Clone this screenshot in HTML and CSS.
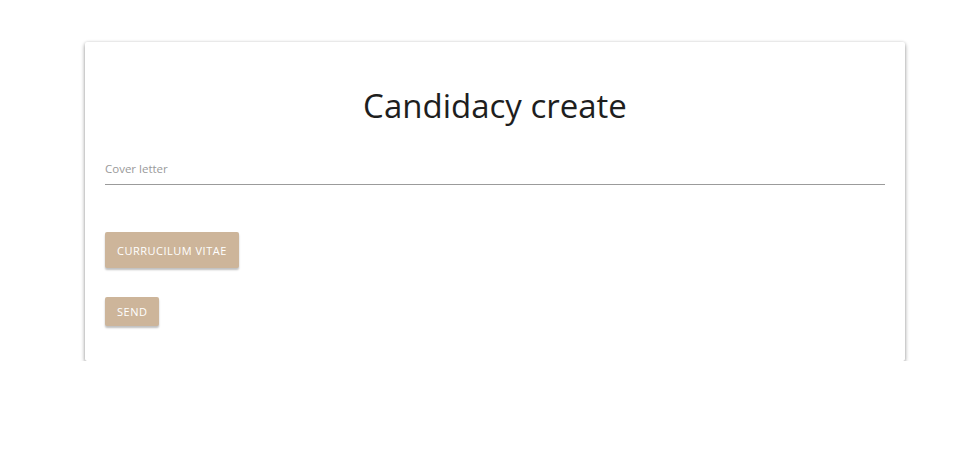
FILE: index.html
```html
<!DOCTYPE html>
<html>
<head>
<meta charset="utf-8">
<link rel="stylesheet" href="styles.css">
</head>
<body>
<div class="card">
  <h1 class="title">Candidacy create</h1>
  <div class="field">
    <label class="label">Cover letter</label>
    <div class="line"></div>
  </div>
  <div class="actions">
    <button class="btn">Currucilum vitae</button>
    <button class="btn btn-small">Send</button>
  </div>
</div>
</body>
</html>
```
FILE: styles.css
```css
html, body {
  margin: 0;
  padding: 0;
  background: #ffffff;
  font-family: "Open Sans", "Noto Sans", sans-serif;
}
.card {
  width: 820px;
  margin: 42px 0 0 85px;
  box-sizing: border-box;
  padding: 44px 20px 35px;
  background: #fff;
  box-shadow: 0 2px 4px rgba(0,0,0,0.4), 0 0 3px rgba(0,0,0,0.1);
  border-radius: 2px;
}
.title {
  margin: 0;
  text-align: center;
  font-weight: 400;
  font-size: 33px;
  line-height: 40px;
  color: #1e1e1e;
}
.field {
  margin-top: 36px;
}
.label {
  display: block;
  font-size: 11.5px;
  line-height: 14px;
  color: #9a9a9a;
  padding-bottom: 8px;
}
.line {
  height: 1px;
  background: #9b9b9b;
}
.actions {
  margin-top: 47px;
  display: flex;
  flex-direction: column;
  align-items: flex-start;
  gap: 29px;
}
.btn {
  font-family: "Open Sans", "Noto Sans", sans-serif;
  background: #cdb59a;
  color: #fff;
  border: none;
  border-radius: 2px;
  text-transform: uppercase;
  font-size: 11px;
  letter-spacing: 0.5px;
  height: 36px;
  padding: 0 12px;
  box-shadow: 0 2px 2px rgba(0,0,0,0.25);
}
.btn-small {
  height: 29px;
  padding: 0 12px;
}
```
